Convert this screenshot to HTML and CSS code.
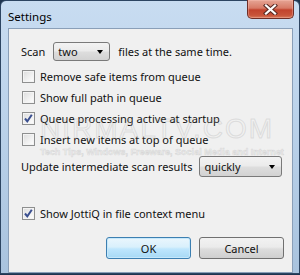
FILE: index.html
```html
<!DOCTYPE html>
<html lang="en">
<head>
    <meta charset="UTF-8">
    <title>Settings</title>
    <link rel="stylesheet" href="styles.css">
</head>
<body>
    <div class="window">
        <div class="titlebar">
            <span class="title">Settings</span>
            <div class="close-btn">
                <svg width="17" height="11" viewBox="0 0 17 11">
                    <path d="M4 1.5 L13 9.5 M13 1.5 L4 9.5" stroke="#5a2a24" stroke-width="4.2" stroke-linecap="square"/>
                    <path d="M4 1.5 L13 9.5 M13 1.5 L4 9.5" stroke="#ffffff" stroke-width="2.2" stroke-linecap="square"/>
                </svg>
            </div>
        </div>

        <div class="client">
            <div class="row scan-row">
                <span>Scan</span>
                <div class="combo combo-scan"><span>two</span><i class="arrow"></i></div>
                <span>files at the same time.</span>
            </div>

            <div class="checks">
                <label class="check-row"><span class="box"></span>Remove safe items from queue</label>
                <label class="check-row"><span class="box"></span>Show full path in queue</label>
                <label class="check-row"><span class="box checked"><svg width="11" height="11" viewBox="0 0 11 11"><path d="M2 5.5 L4.3 8.3 L8.8 1.8" fill="none" stroke="#3a4f8f" stroke-width="2"/></svg></span>Queue processing active at startup</label>
                <label class="check-row"><span class="box"></span>Insert new items at top of queue</label>
            </div>

            <div class="row update-row">
                <span>Update intermediate scan results</span>
                <div class="combo combo-update"><span>quickly</span><i class="arrow"></i></div>
            </div>

            <label class="check-row jotti-row"><span class="box checked"><svg width="11" height="11" viewBox="0 0 11 11"><path d="M2 5.5 L4.3 8.3 L8.8 1.8" fill="none" stroke="#3a4f8f" stroke-width="2"/></svg></span>Show JottiQ in file context menu</label>

            <div class="buttons">
                <div class="btn btn-default">OK</div>
                <div class="btn">Cancel</div>
            </div>

            <!-- watermark of the screenshot source -->
            <div class="watermark">
                <div class="wm-big">NIRMALTV.COM</div>
                <div class="wm-small">Tech Tips, Windows, Freeware, Social Media and Internet</div>
            </div>
        </div>
    </div>
</body>
</html>
```

FILE: styles.css
```css
/* base */
body {
    margin: 0;
    width: 300px;
    height: 275px;
    overflow: hidden;
    background: #1f3550;
    font-family: 'Segoe UI', 'Noto Sans', sans-serif;
    font-size: 11px;
    color: #111;
    white-space: nowrap;
}

/* aero window frame */
.window {
    width: 298px;
    height: 272px;
    border: 1px solid #2d4562;
    border-radius: 6px 6px 0 0;
    background: linear-gradient(180deg, #c8dcf1 0%, #bcd3eb 40%, #a9c3de 100%);
    display: flex;
    flex-direction: column;
}
.titlebar {
    height: 28px;
    display: flex;
    justify-content: space-between;
    align-items: flex-start;
}
.title {
    padding: 8px 0 0 7px;
    font-size: 11.5px;
    color: #000;
}
.close-btn {
    width: 45px;
    height: 18px;
    margin-right: 5px;
    margin-top: -1px;
    border: 1px solid #6e2e27;
    border-top: none;
    border-radius: 0 0 5px 5px;
    background: linear-gradient(180deg, #e6a595 0%, #d77a66 45%, #c2432d 55%, #c8543a 85%, #d77a5c 100%);
    box-shadow: inset 0 0 0 1px rgba(255,200,190,0.35);
    display: flex;
    align-items: center;
    justify-content: center;
}

/* client area */
.client {
    position: relative;
    margin: 0 6px 0 7px;
    height: 236px;
    border: 1px solid #8a9fb8;
    background: #f0f0f0;
    padding: 12px 0 0 12px;
    box-sizing: content-box;
}
.row {
    display: flex;
    align-items: center;
    height: 21px;
}
.scan-row span:first-child {
    margin-right: 8px;
}
.combo {
    height: 19px;
    border: 1px solid #7a7a7a;
    border-radius: 3px;
    background: linear-gradient(180deg, #f3f3f3 0%, #ebebeb 45%, #dddddd 55%, #d2d2d2 100%);
    display: flex;
    align-items: center;
    justify-content: space-between;
    padding: 0 6px 0 4px;
    box-sizing: border-box;
}
.combo-scan {
    width: 57px;
    margin-right: 8px;
}
.combo-update {
    width: 83px;
    height: 21px;
    margin-left: 7px;
}
.arrow {
    width: 0;
    height: 0;
    border-left: 3.5px solid transparent;
    border-right: 3.5px solid transparent;
    border-top: 4px solid #000;
}

/* checkboxes */
.checks {
    margin-top: 4px;
}
.check-row {
    display: flex;
    align-items: center;
    height: 21px;
}
.box {
    width: 11px;
    height: 11px;
    margin: 0 5px 0 1px;
    border: 1px solid #8e8f8f;
    background: linear-gradient(135deg, #dcdcdc 0%, #f2f2f2 60%, #ffffff 100%);
    box-shadow: inset 0 0 0 1px #f4f4f4;
    display: flex;
}
.update-row {
    margin-top: 6px;
}
.jotti-row {
    margin-top: 26px;
}

/* buttons */
.buttons {
    display: flex;
    margin: 13px 0 0 85px;
    gap: 8px;
}
.btn {
    width: 83px;
    height: 20px;
    border: 1px solid #707070;
    border-radius: 3px;
    background: linear-gradient(180deg, #f2f2f2 0%, #ebebeb 45%, #dddddd 55%, #cfcfcf 100%);
    display: flex;
    align-items: center;
    justify-content: center;
}
.btn-default {
    border-color: #3c7fb1;
    background: linear-gradient(180deg, #eaf6fd 0%, #d9f0fc 45%, #bee6fd 55%, #a7d9f5 100%);
    box-shadow: inset 0 0 0 1px #c6e8fb;
}

/* faint watermark over the dialog */
.watermark {
    position: absolute;
    left: 31px;
    top: 84px;
    color: transparent;
    pointer-events: none;
}
.wm-big {
    font-family: 'Liberation Sans', sans-serif;
    font-size: 28px;
    letter-spacing: 2px;
    -webkit-text-stroke: 1px rgba(170,170,170,0.3);
}
.wm-small {
    margin-top: 2px;
    font-family: 'Liberation Sans', sans-serif;
    font-size: 9px;
    font-weight: bold;
    -webkit-text-stroke: 0.6px rgba(170,170,170,0.35);
}
```
